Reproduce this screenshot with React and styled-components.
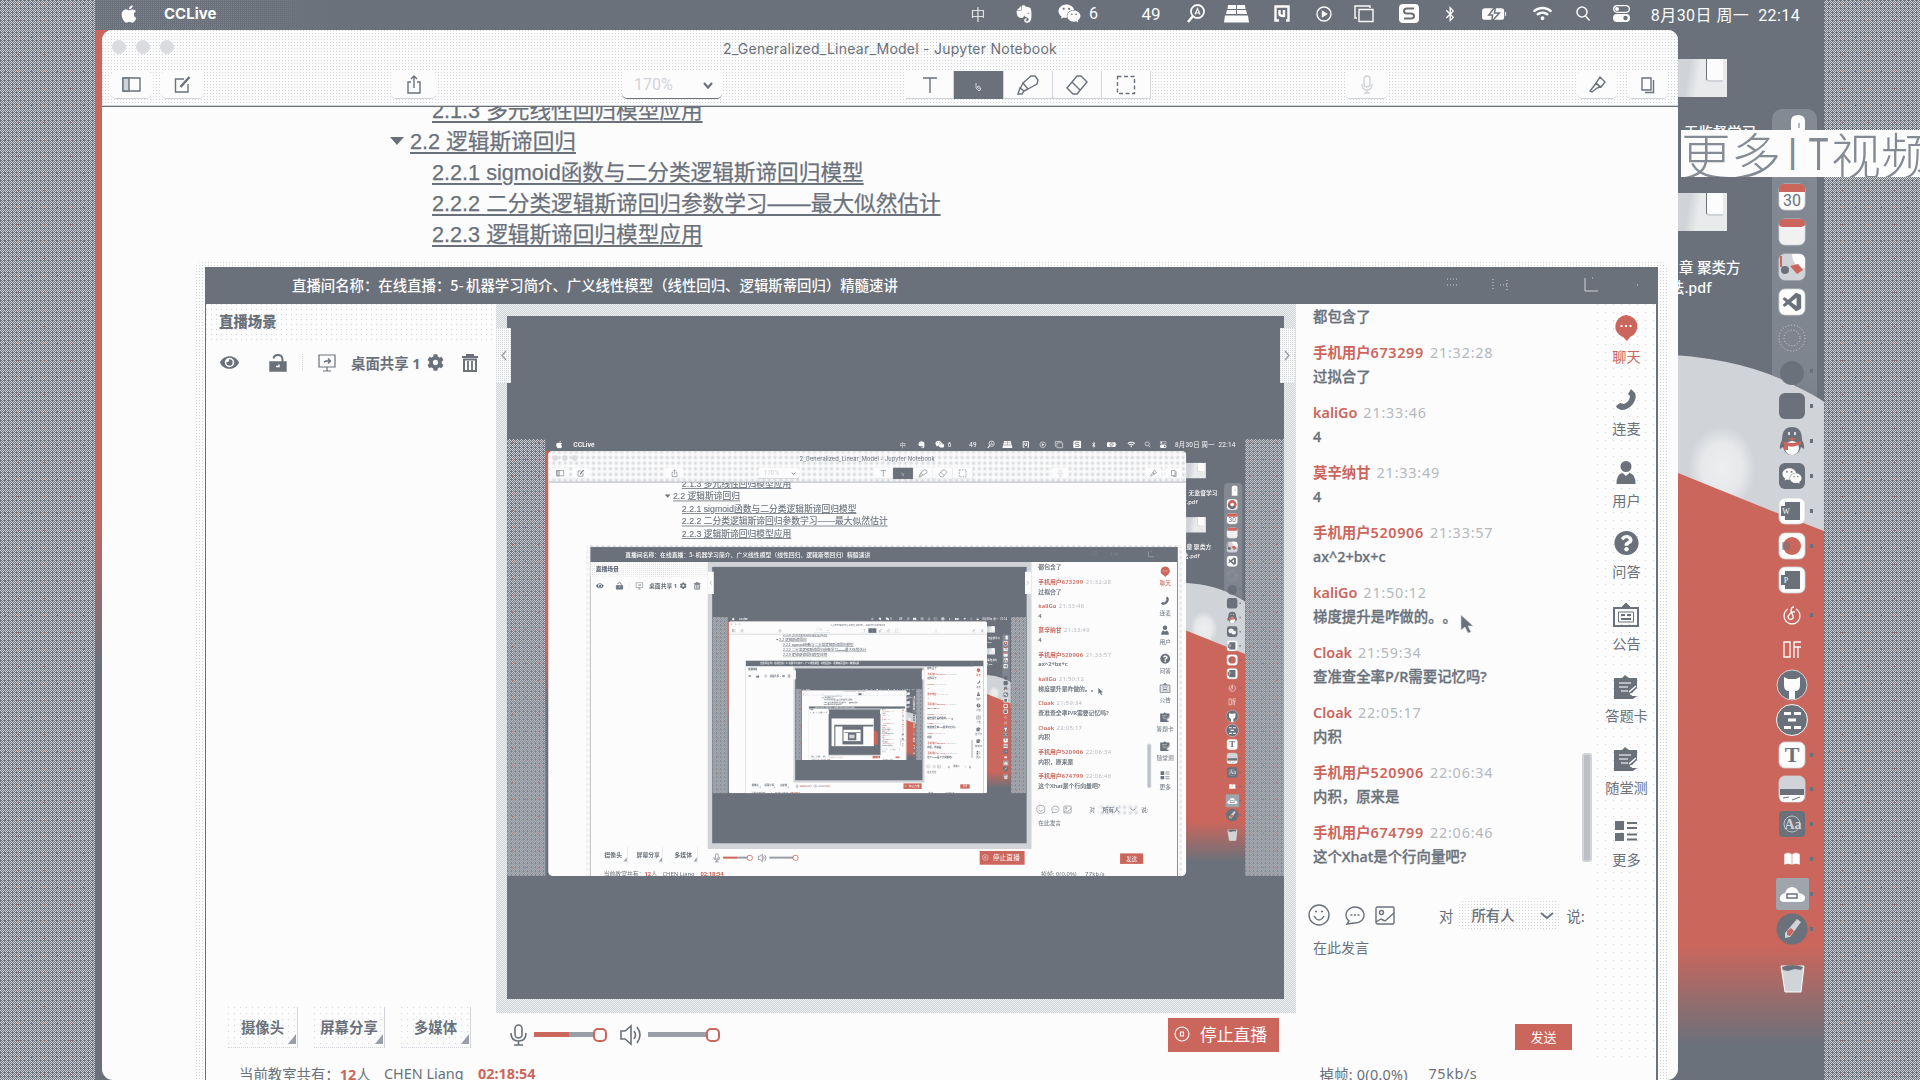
import React from "react";
import styled, { createGlobalStyle, css } from "styled-components";
import {
  FaApple, FaEvernote, FaWeixin, FaBluetoothB, FaWifi, FaEye, FaCog, FaPhone,
  FaQuestionCircle,
} from "react-icons/fa";
import { BiLogoVisualStudio } from "react-icons/bi";

const SLATE = "#6a717b";
const LIGHT = "#d0d3d8";
const WHITE = "#fcfcfc";
const RED = "#cb665c";
const SHOT_SCALE = 777 / 1920;
const MAX_DEPTH = 3;

const Global = createGlobalStyle`
  html, body { margin: 0; padding: 0; background: ${SLATE}; overflow: hidden; }
  * { box-sizing: border-box; }
`;

const sans = `"Noto Sans", "Noto Sans CJK SC", sans-serif`;

const grain = (size) => css`
  background-color: ${WHITE};
  background-image: conic-gradient(from 0deg at 1px 1px, transparent 75%, ${LIGHT} 0);
  background-size: ${size}px ${size}px;
`;

/* ---------- desktop ---------- */
const Scene = styled.div`
  width: 1920px; height: 1080px; display: flex; overflow: hidden; position: relative;
  font-family: ${sans}; color: ${SLATE}; background: ${SLATE};
  text-spacing-trim: space-all;
`;
const unit = (p) => 1 / Math.pow(SHOT_SCALE, p.$depth);
const SideBand = styled.div`
  flex: 0 0 ${(p) => p.$w}px;
  background:
    conic-gradient(from 0deg at ${unit}px ${unit}px, transparent 75%, ${RED} 0) ${(p) => 5 * unit(p)}px ${(p) => 3 * unit(p)}px / ${(p) => 13 * unit(p)}px ${(p) => 17 * unit(p)}px,
    conic-gradient(from 0deg at ${unit}px ${unit}px, transparent 75%, ${SLATE} 0) 0 0 / ${(p) => 4 * unit(p)}px ${(p) => 4 * unit(p)}px,
    repeating-conic-gradient(${SLATE} 0 25%, ${LIGHT} 0 50%) 0 0 / ${(p) => 2 * unit(p)}px ${(p) => 2 * unit(p)}px;
`;
const Desktop = styled.div`
  flex: 0 0 1729px; position: relative; display: flex; flex-direction: column; overflow: hidden;
`;
const Wallpaper = styled.svg`position: absolute; inset: 0; width: 1729px; height: 1080px;`;

const MenuBar = styled.div`
  position: relative; height: 30px; flex: none; display: flex; align-items: center;
  padding: 0 0 6px 25px; color: ${WHITE}; background: ${SLATE};
  &::before {
    content: ""; position: absolute; left: 0; top: 0; width: 260px; height: 30px;
    background: conic-gradient(from 0deg at 1px 1px, transparent 75%, ${RED} 0) 0 0 / 2px 2px;
    mask-image: linear-gradient(90deg, #000 40%, transparent);
  }
`;
const MenuSlot = styled.div`
  position: relative; flex: none; height: 24px; width: ${(p) => p.$w}px; margin-left: ${(p) => p.$ml || 0}px;
  display: flex; align-items: center; justify-content: center; white-space: pre;
  padding-top: 3px;
  font: 400 ${(p) => p.$size || 16}px Roboto, "Noto Sans CJK SC", sans-serif;
  letter-spacing: ${(p) => p.$ls || 0}px;
  opacity: ${(p) => p.$o || 1};
`;
const AppName = styled(MenuSlot)`font-weight: 700; font-family: Inter, sans-serif; font-size: 15px; justify-content: flex-start;`;

const FileThumb = styled.div`
  position: absolute; left: 1560px; top: ${(p) => p.$y}px; width: 72px; height: 38px;
  background: linear-gradient(100deg, ${LIGHT} 45%, #e9eaec 60%);
  display: flex; justify-content: flex-end; padding: 0 4px 0 0;
  &::after {
    content: ""; width: 16px; height: 21px; background: ${WHITE};
    border-left: 1px solid ${SLATE}; border-bottom: 2px solid ${LIGHT}; border-bottom-left-radius: 4px;
  }
`;
const FileLabel = styled.div`
  position: absolute; left: ${(p) => p.$x}px; top: ${(p) => p.$y}px;
  font: 500 14.4px/20px ${sans}; color: ${WHITE}; white-space: pre;
`;

/* ---------- dock ---------- */
const Dock = styled.div`
  position: absolute; left: 1677px; top: 109px; width: 45px; height: 893px; border-radius: 10px;
  background: linear-gradient(rgba(208,211,216,.26) 0, rgba(208,211,216,.2) 30%, transparent 44%);
  display: flex; flex-direction: column; align-items: flex-start; padding: 1px 0 0 3px;
`;
const DockSlot = styled.div`
  flex: none; height: 34.85px; width: 40px; display: flex; align-items: center;
  margin-top: ${(p) => p.$mt || 0}px;
  &::after {
    content: ""; width: 3px; height: 4px; margin-left: 1px;
    background: ${(p) => (p.$run ? SLATE : "transparent")};
  }
`;
const DockIcon = styled.svg`width: 34px; height: 34px; overflow: visible; flex: none;`;

const Tile = ({ fill = WHITE, children }) => (
  <>
    <rect x="4" y="4" width="26" height="26" rx="6" fill={fill} stroke={LIGHT} strokeWidth=".8" />
    {children}
  </>
);
const glyph = { textAnchor: "middle", fontFamily: "Liberation Serif, serif" };

const DOCK = [
  { art: <><path d="M16 30V11q0-6 7-6t7 6v19z" fill={WHITE} /><path d="M24 13v5" stroke={SLATE} /></> },
  { art: <Tile><circle cx="17" cy="17" r="11" fill={RED} /><path d="M6 17a11 11 0 0 0 20 6L17 17z" fill={SLATE} /><circle cx="17" cy="17" r="4.5" fill={WHITE} /></Tile> },
  { art: <Tile><path d="M4 12V9q0-5 5-5h16q5 0 5 5v3z" fill={RED} /><text x="17" y="26" fontSize="16" {...glyph} fontFamily="Roboto, sans-serif" fill={SLATE}>30</text></Tile> },
  { art: <Tile fill="#f1f1f2"><path d="M4 10V9q0-5 5-5h16q5 0 5 5v1q-2 2-4 2H8q-3 0-4-2z" fill={RED} /></Tile> },
  { art: <Tile fill={LIGHT}><path d="M17 4h7q6 0 6 6v8q-12 0-13-14z" fill={WHITE} /><path d="M15 16l8-2 5 6-6 4z" fill={RED} /><circle cx="10" cy="20" r="4" fill={SLATE} /><path d="M6 6v11" stroke={RED} strokeWidth="2" /></Tile> },
  { art: <><Tile /><BiLogoVisualStudio x="6" y="6" size="22" color={SLATE} /></> },
  { art: <g fill="none" stroke={LIGHT} strokeDasharray="1 2"><circle cx="17" cy="19" r="13" /><circle cx="17" cy="19" r="8" /></g> },
  { run: 1, art: <><circle cx="17" cy="19" r="12" fill={SLATE} /><path d="M17 24l5 9-2-10z" fill={SLATE} /></> },
  { run: 1, art: <rect x="4" y="4" width="26" height="26" rx="6" fill={SLATE} /> },
  { run: 1, art: <><path d="M7 16Q7 3 17 3t10 13q3 6 2 9l-3-2q-2 8-9 8t-9-8l-3 2q-1-3 2-9z" fill={SLATE} /><ellipse cx="17" cy="24" rx="7" ry="7" fill={WHITE} /><path d="M8 17q9 4 18 0v3q-8 4-13 2v4h-4v-5z" fill={RED} /><path d="M13 14h8l-4 3z" fill={RED} /><path d="M14 8v3M20 8v3" stroke={WHITE} strokeWidth="1.500" /></> },
  { run: 1, art: <><rect x="4" y="4" width="26" height="26" rx="6" fill={SLATE} /><FaWeixin x="7" y="7" size="20" color={WHITE} /></> },
  { run: 1, art: <Tile><path d="M10 8h15v18H10v-4H6V12h4z" fill={SLATE} /><text x="11" y="20" fontSize="8" fill={WHITE} {...glyph}>W</text></Tile> },
  { run: 1, art: <Tile><circle cx="17" cy="17" r="9" fill={RED} /><path d="M7 13h8v8H7z" fill={SLATE} opacity=".5" /></Tile> },
  { art: <Tile><path d="M10 8h15v18H10v-4H6V12h4z" fill={SLATE} /><text x="11" y="20" fontSize="8" fill={WHITE} {...glyph}>P</text></Tile> },
  { run: 1, art: <g fill="none" stroke={WHITE} strokeWidth="1.300"><path d="M13 11a8 8 0 1 0 8 0M19 9q-3 0-3 4l2 5a2.500 2.500 0 1 1-4-1q2-4 6-3" /></g> },
  { art: <g fill="none" stroke={WHITE} strokeWidth="1.300"><path d="M9 9h6v15H9zM26 9h-7v16M19 14h7M23 14v11" /></g> },
  { art: <><circle cx="17" cy="17" r="15" fill={SLATE} stroke={LIGHT} /><path d="M9 9l4 2h8l4-2v8q0 6-5 6v8h-6v-8q-5 0-5-6z" fill={WHITE} /></> },
  { art: <><circle cx="17" cy="17" r="15.500" fill={SLATE} stroke={WHITE} /><path d="M9 9h7v3H9zM19 9h7v3h-7zM13 15.500h8v3h-8zM9 23h7v3H9zM19 23h7v3h-7z" fill={WHITE} /></> },
  { run: 1, art: <Tile><text x="17" y="24" fontSize="22" fontWeight="700" fill={SLATE} {...glyph}>T</text></Tile> },
  { run: 1, art: <Tile fill={LIGHT}><path d="M5 17h24v6H5z" fill={SLATE} /><path d="M5 23h24v4q-2 3-5 3H9q-4 0-4-3z" fill={WHITE} /><path d="M8 26l6-1M17 28l8-3" stroke={SLATE} /></Tile> },
  { run: 1, art: <><rect x="4" y="4" width="26" height="26" rx="4" fill={SLATE} /><circle cx="17" cy="17" r="8" fill="none" stroke={LIGHT} strokeWidth=".8" /><text x="18" y="22" fontSize="14" fontWeight="700" fill={LIGHT} {...glyph}>Aa</text></> },
  { run: 1, art: <path d="M9 12q4-3 8 0 4-3 8 0v11q-4-2-8 0-4-2-8 0zM17 12v11" fill={WHITE} stroke={RED} strokeWidth=".5" /> },
  { run: 1, art: <><rect x="1" y="1" width="33" height="32" rx="2" fill="#a0a4ab" /><path d="M8 25q-4-1-3-5 1-3 5-4 2-6 7-6t7 6q6 1 6 5 0 4-5 4z" fill={WHITE} /><rect x="12" y="17" width="10" height="4" fill="none" stroke={SLATE} strokeWidth="1.500" /></> },
  { run: 1, art: <><circle cx="17" cy="17" r="15.500" fill={SLATE} /><path d="M10 21L22 7l4 3-11 15-5 1z" fill={LIGHT} /><path d="M12 19l4-3 3 3-4 5-3-1z" fill={RED} /></> },
  { mt: 15, art: <><path d="M6 4h23l-3 26H10z" fill={LIGHT} stroke={WHITE} /><path d="M7 5q10-4 21 0l-2 3-6-1-7 2-5-1z" fill={SLATE} /></> },
];

/* ---------- notebook window ---------- */
const NoteWindow = styled.div`
  position: absolute; left: 7px; top: 30px; width: 1576px; height: 1050px;
  background: ${WHITE}; border-radius: 10px 10px 11px 11px; overflow: hidden;
  display: flex; flex-direction: column;
`;
const NoteHeader = styled.div`
  flex: 0 0 77px; display: flex; flex-direction: column; ${grain(3)}
  border-bottom: 1px solid ${SLATE}; box-shadow: inset 0 -1px ${LIGHT};
`;
const TitleRow = styled.div`
  display: grid; grid-template-columns: 1fr auto 1fr; height: 38px; align-items: center; padding-bottom: 2px;
  font: 400 14px Inter, sans-serif; letter-spacing: 0.25px;
`;
const Lights = styled.div`
  display: flex; gap: 10px; padding: 0 0 3px 10px;
  i { width: 14px; height: 14px; border-radius: 7px; background: #dadce0; }
`;
const NoteTools = styled.div`display: flex; padding: 3px 0 0 9px; height: 33px;`;
const ToolButton = styled.div`
  flex: none; width: ${(p) => p.$w}px; height: 28px; margin-left: ${(p) => p.$ml || 0}px;
  display: flex; align-items: center; justify-content: center;
  background: ${(p) => (p.$on ? SLATE : WHITE)}; border-radius: ${(p) => (p.$flat ? 0 : 5)}px;
  border-right: ${(p) => (p.$flat ? `1px solid ${LIGHT}` : "0")};
  border-bottom: ${(p) => (p.$on ? 0 : 1)}px solid ${(p) => p.$edge || LIGHT};
`;
const ToolGroup = styled.div`
  display: flex; margin-left: 184px; width: 245px; height: 28px; border-radius: 5px; background: ${WHITE};
`;
const ZoomSelect = styled(ToolButton)`
  justify-content: space-between; padding: 0 9px 0 12px; font: 400 16px Roboto, sans-serif; color: ${LIGHT};
`;
const Line = styled.svg`
  fill: none; stroke: currentColor; stroke-width: ${(p) => p.$sw || 1.4};
  color: ${(p) => p.$c || SLATE}; overflow: visible; flex: none;
`;
const Outline = styled.div`
  display: flex; flex-direction: column; margin-top: -12px; overflow: hidden; padding-left: 288px;
  clip-path: inset(12px 0 0 0);
`;
const OutlineRow = styled.div`
  height: 31px; display: flex; align-items: center; padding-left: ${(p) => (p.$top ? 0 : 42)}px;
  font: 400 21.65px/31px "Liberation Sans", "Noto Sans CJK SC", sans-serif; white-space: pre;
  -webkit-text-stroke: 0.25px ${SLATE};
  span { text-decoration: underline; text-decoration-thickness: 1.5px; text-underline-offset: 3px; }
`;
const Caret = styled.div`
  border: 7px solid transparent; border-top: 8px solid ${SLATE}; border-bottom: 0; margin: 0 6px 2px 0;
`;

/* ---------- live window ---------- */
const LiveWindow = styled.div`
  position: absolute; left: 110px; top: 267px; width: 1453px; height: 813px;
  display: flex; flex-direction: column; background: ${WHITE}; overflow: hidden;
  border: 1px solid ${SLATE}; border-width: 0 2px 0 1px;
`;
const LiveShadow = styled.div`
  position: absolute; left: 101px; top: 262px; width: 1471px; height: 818px;
  background: conic-gradient(from 0deg at 1px 1px, transparent 75%, ${LIGHT} 0) 0 0 / 3px 3px;
  border-radius: 6px 6px 0 0;
`;
const LiveTitle = styled.div`
  flex: 0 0 37px; background: ${SLATE}; color: ${WHITE}; display: flex; align-items: center;
  justify-content: space-between; padding: 0 38px 2px 86px;
  font: 500 14.4px "Noto Sans CJK SC", sans-serif; white-space: pre;
`;
const Wide = styled.span`letter-spacing: 2.4px;`;
const LiveMain = styled.div`
  flex: 0 0 754px; display: grid; grid-template-columns: 290px 800px 301px 59px;
`;
const Column = styled.div`display: flex; flex-direction: column; min-width: 0; min-height: 0;`;
const SceneHeader = styled.div`
  height: 36px; flex: none; ${grain(5)} display: flex; align-items: center; padding: 0 0 3px 13px;
  font: 900 14.4px "Noto Sans CJK SC", sans-serif;
`;
const SourceRow = styled.div`
  height: 46px; display: flex; align-items: center; padding: 0 0 1px 14px;
  font: 700 14.4px ${sans}; white-space: pre;
`;
const Gap = styled.div`flex: 0 0 ${(p) => p.$w}px;`;
const Divider = styled.div`height: 17px; border-left: 1px dotted ${LIGHT};`;
const Fill = styled.div`flex: 1;`;
const AddRow = styled.div`display: flex; gap: 16px; padding: 0 0 10px 22px;`;
const AddButton = styled.div`
  position: relative; width: ${(p) => p.$w}px; height: 41px; ${grain(6)}
  border-bottom: 1px dotted ${LIGHT}; border-right: 1px solid ${LIGHT};
  display: flex; align-items: center; justify-content: center; padding-bottom: 2px;
  font: 700 14.4px "Noto Sans CJK SC", sans-serif;
  &::after {
    content: ""; position: absolute; right: 1px; bottom: 3px; border-left: 8px solid transparent;
    border-bottom: 10px solid #9a9fa7;
  }
`;
const StageFrame = styled.div`
  position: relative; flex: 0 0 709px; padding: 12px 12px 14px 11px; display: flex;
  background: repeating-conic-gradient(${LIGHT} 0 25%, #eceef0 0 50%) 0 0 / 2px 2px;
`;
const Stage = styled.div`
  flex: 1; background: ${SLATE}; display: flex; align-items: center; overflow: hidden;
`;
const Shot = styled.div`width: 777px; height: 437px; flex: none; overflow: hidden;`;
const Shrink = styled.div`
  width: 1920px; height: 1080px; transform: scale(${SHOT_SCALE}); transform-origin: 0 0;
`;
const Handle = styled.div`
  position: absolute; top: 24px; width: 15px; height: 55px; ${(p) => (p.$right ? "right: 1px" : "left: 0")};
  ${grain(2)} display: flex; align-items: center; justify-content: center;
`;
const Controls = styled.div`display: flex; height: 43px; align-items: center; padding-left: 14px;`;
const Slider = styled.div`
  width: ${(p) => p.$w}px; height: 11px; display: flex; align-items: center; margin-left: ${(p) => p.$ml}px;
  &::before {
    content: ""; flex: 1; height: 5px;
    background: linear-gradient(90deg, ${(p) => p.$c} ${(p) => p.$v}%, #9a9fa7 ${(p) => p.$v}%);
  }
  &::after {
    content: ""; width: 10px; height: 10px; border-radius: 5px; border: 2px solid ${RED}; background: ${WHITE}; margin-left: -2px;
  }
`;
const StopButton = styled.div`
  margin-left: auto; margin-right: 17px; width: 111px; height: 34px; background: ${RED}; color: ${WHITE};
  display: flex; align-items: center; gap: 10px; padding: 0 0 2px 6px;
  font: 400 16.8px "Noto Sans CJK SC", sans-serif;
`;

/* ---------- chat ---------- */
const ChatArea = styled.div`flex: 0 0 584px; display: flex; padding: 1px 5px 0 17px; overflow: hidden;`;
const ChatList = styled.div`flex: 1; display: flex; flex-direction: column; gap: 12px;`;
const Message = styled.div`
  display: flex; flex-direction: column; font: 500 14.4px/24px "Noto Sans", "Noto Sans CJK SC", sans-serif; white-space: pre;
  -webkit-text-stroke: 0.3px currentColor;
`;
const Who = styled.div`color: ${RED}; font-weight: 600; height: 24px; overflow: hidden; -webkit-text-stroke: 0;`;
const Num = styled.span`letter-spacing: 0.65px;`;
const Time = styled.span`color: #b4b8bf; font-weight: 400; letter-spacing: 0.8px; margin-left: 6px;`;
const ScrollThumb = styled.div`
  width: 10px; height: 109px; margin-top: 448px; border-radius: 3px; background: #bcc0c6; border: 2px solid ${LIGHT};
`;
const ComposeTools = styled.div`
  height: 54px; display: flex; align-items: center; padding-left: 12px;
  font: 400 14.4px "Noto Sans CJK SC", sans-serif; white-space: pre;
`;
const Audience = styled.div`
  width: 101px; height: 28px; margin: 0 6px 0 6px; display: flex; align-items: center; justify-content: space-between;
  padding: 0 7px 1px 12px; ${grain(3)} font-weight: 500; border-radius: 4px;
`;
const Placeholder = styled.div`padding-left: 17px; font: 400 14px/22px "Noto Sans CJK SC", sans-serif; margin-top: -6px;`;
const SendButton = styled.div`
  align-self: flex-end; margin: 0 25px 8px 0; width: 57px; height: 26px; background: ${RED}; color: ${WHITE};
  display: flex; align-items: center; justify-content: center; font: 400 13px "Noto Sans CJK SC", sans-serif;
  padding-bottom: 2px;
`;
const Tabs = styled.div`
  display: flex; flex-direction: column; align-items: center; padding-top: 11px; ${grain(8)}
`;
const Tab = styled.div`
  height: 71.8px; display: flex; flex-direction: column; align-items: center; gap: 7px; flex: none;
  color: ${(p) => (p.$on ? RED : SLATE)}; font: 400 14.2px/16px "Noto Sans CJK SC", sans-serif; white-space: nowrap;
  svg { height: 26px; flex: none; overflow: visible; }
`;
const StatusBar = styled.div`
  height: 32px; flex: none; display: flex; align-items: center; padding: 0 0 2px 33px;
  font: 400 14.4px "Noto Sans", "Noto Sans CJK SC", sans-serif; white-space: pre;
  b { color: ${RED}; font-weight: 700; }
`;
const StatusText = styled.span`
  margin-left: ${(p) => p.$ml || 0}px; width: ${(p) => (p.$w ? p.$w + "px" : "auto")}; flex: none;
  letter-spacing: ${(p) => p.$ls || 0}px;
`;
const Pointer = styled.svg`position: absolute; left: 1365px; top: 614px; width: 14px; height: 20px;`;

/* ---------- banner ---------- */
const Banner = styled.div`
  position: absolute; left: 1681px; top: 130px; width: 239px; height: 47px; background: ${WHITE};
  overflow: hidden; display: flex; align-items: center; white-space: nowrap;
  font: 300 50px/47px "Noto Sans CJK SC", sans-serif; color: #858b94;
`;
const Narrow = styled.span`
  font: 400 47px/47px "Liberation Sans", sans-serif; width: 25px; flex: none; display: flex; justify-content: center;
  transform: translateX(${(p) => p.$dx}px) scaleX(0.7);
`;

const MESSAGES = [
  { text: "都包含了" },
  { who: "手机用户", num: "673299", at: "21:32:28", text: "过拟合了" },
  { who: "kaliGo", at: "21:33:46", text: "4" },
  { who: "莫辛纳甘", at: "21:33:49", text: "4" },
  { who: "手机用户", num: "520906", at: "21:33:57", text: "ax^2+bx+c" },
  { who: "kaliGo", at: "21:50:12", text: "梯度提升是咋做的。。" },
  { who: "Cloak", at: "21:59:34", text: "查准查全率P/R需要记忆吗?" },
  { who: "Cloak", at: "22:05:17", text: "内积" },
  { who: "手机用户", num: "520906", at: "22:06:34", text: "内积，原来是" },
  { who: "手机用户", num: "674799", at: "22:06:46", text: "这个Xhat是个行向量吧?" },
];

const Clipboard = () => (
  <svg width="26" viewBox="0 0 26 26" fill="currentColor">
    <path d="M1 4h8l3-3 4 3h8v10l-6 6 1 2h5l-4 3H1z" />
    <path d="M6 9h12M6 13h9M8 17h7" stroke={LIGHT} strokeWidth="1.400" />
    <path d="M16 18l7-6M17 20h7" stroke={WHITE} strokeWidth="1.500" />
  </svg>
);

const TABS = [
  ["聊天", <svg width="26" viewBox="0 0 26 26"><path d="M13 0a12.500 11.500 0 0 1 4 22l-3 4-4-4A12.500 11.500 0 0 1 13 0z" fill={RED} /><path d="M7.500 11h2M12 11h2M16.500 11h2" stroke={WHITE} strokeWidth="2" /></svg>],
  ["连麦", <svg width="24" viewBox="0 0 24 26"><path d="M17 2l4 4q2 5-2 11-5 6-12 6l-4-2-1-2 4-3 4 1q6-3 6-8l-2-2z" fill="currentColor" /></svg>],
  ["用户", <svg width="22" viewBox="0 0 22 26" fill="currentColor"><circle cx="11" cy="7.500" r="5.500" /><path d="M1.500 25q0-10 6-11l3.500 3 3.500-3q6 1 6 11z" /></svg>],
  ["问答", <FaQuestionCircle size={25} />],
  ["公告", <svg width="26" viewBox="0 0 26 26" fill="none" stroke="currentColor"><path d="M1 6h24v18H1z" strokeWidth="2" /><path d="M9 5l4-4 4 4z" fill="currentColor" /><path d="M5.500 10h15v10h-15z" /><path d="M8 13h4M14 13h4M8 17h10" strokeWidth="2" /></svg>],
  ["答题卡", <Clipboard />],
  ["随堂测", <Clipboard />],
  ["更多", <svg width="24" viewBox="0 0 24 26" fill="currentColor"><path d="M1 3h9v9H1zM1 15h9v8H1z" /><path d="M13 5h10M13 10h10M13 16.500h10M13 21.500h10" stroke="currentColor" strokeWidth="1.800" /></svg>],
];

function MenuItems() {
  return (
    <MenuBar>
      <MenuSlot $w={18}><FaApple size={20} /></MenuSlot>
      <AppName $w={60} $ml={26}>CCLive</AppName>
      <MenuSlot $w={14} $ml={747} $o={0.8} $size={15}>中</MenuSlot>
      <MenuSlot $w={18} $ml={30}><FaEvernote size={20} /></MenuSlot>
      <MenuSlot $w={24} $ml={24}><FaWeixin size={23} /></MenuSlot>
      <MenuSlot $w={9} $ml={8}>6</MenuSlot>
      <MenuSlot $w={20} $ml={43} $size={17}>49</MenuSlot>
      <MenuSlot $w={18} $ml={26}>
        <Line width="18" height="19" viewBox="0 0 18 19" $c={WHITE} $sw={1.8}><circle cx="10.500" cy="7.500" r="6.500" /><path d="M6 12l-5 6" strokeWidth="2.500" /><path d="M8 10.500l2.500-6 2.500 6M9 9h3" strokeWidth="1.200" /></Line>
      </MenuSlot>
      <MenuSlot $w={25} $ml={19}>
        <svg width="25" height="18" viewBox="0 0 25 18" fill={WHITE}><path d="M4 0h8v4H3.500zM13 0h8l.5 4H13zM3 5h9v4H2zM13 5h9l1 4H13zM1 10.500h23l1 7H0z" /></svg>
      </MenuSlot>
      <MenuSlot $w={16} $ml={25}>
        <Line width="16" height="17" viewBox="0 0 16 17" $c={WHITE} $sw={2.4}><path d="M5 15.500H1.500v-14h13v14H12M5.500 5v4q0 2 4.500 2M10 5v7" /></Line>
      </MenuSlot>
      <MenuSlot $w={16} $ml={26}>
        <Line width="16" height="16" viewBox="0 0 16 16" $c={WHITE}><circle cx="8" cy="8" r="7" /><path d="M6.500 5.500v5l4-2.500z" fill={WHITE} /></Line>
      </MenuSlot>
      <MenuSlot $w={20} $ml={22}>
        <Line width="20" height="17" viewBox="0 0 20 17" $c={WHITE}><path d="M5 4.500h14v12H5zM3 13H1V1h15v2" /></Line>
      </MenuSlot>
      <MenuSlot $w={20} $ml={25}>
        <svg width="20" height="19" viewBox="0 0 20 19"><rect width="20" height="19" rx="4" fill={WHITE} /><path d="M15 4.500H8Q5 4.500 5 7t3 2.500h4q3 0 3 2.500t-3 2.500H5" fill="none" stroke={SLATE} strokeWidth="2" /></svg>
      </MenuSlot>
      <MenuSlot $w={10} $ml={26}><FaBluetoothB size={16} /></MenuSlot>
      <MenuSlot $w={26} $ml={27}>
        <svg width="27" height="16" viewBox="0 0 27 16"><rect y="2" width="23" height="12" rx="3" fill={WHITE} /><path d="M24.500 6v4" stroke={WHITE} /><path d="M14 0L7 9h4l-1 7 8-9h-5z" fill={WHITE} stroke={SLATE} strokeWidth="1.500" /></svg>
      </MenuSlot>
      <MenuSlot $w={19} $ml={25}><FaWifi size={19} /></MenuSlot>
      <MenuSlot $w={14} $ml={24}>
        <Line width="14" height="15" viewBox="0 0 14 15" $c={WHITE} $sw={1.5}><circle cx="6" cy="6" r="5" /><path d="M9.500 10l4 4.500" /></Line>
      </MenuSlot>
      <MenuSlot $w={17} $ml={23}>
        <svg width="17" height="17" viewBox="0 0 17 17"><rect x=".7" y=".7" width="15.600" height="6.600" rx="3.300" fill="none" stroke={WHITE} strokeWidth="1.300" /><circle cx="4" cy="4" r="2" fill={WHITE} /><rect y="9" width="17" height="8" rx="4" fill={WHITE} /><circle cx="12.500" cy="13" r="2.200" fill={SLATE} /></svg>
      </MenuSlot>
      <MenuSlot $w={151} $ml={20} $ls={0.45}>8月30日 周一  22:14</MenuSlot>
    </MenuBar>
  );
}

function Notebook() {
  return (
    <NoteWindow>
      <NoteHeader>
        <TitleRow>
          <Lights><i /><i /><i /></Lights>
          <span>2_Generalized_Linear_Model - Jupyter Notebook</span>
        </TitleRow>
        <NoteTools>
          <ToolButton $w={40}>
            <Line width="19" height="15" viewBox="0 0 19 15"><path d="M1 1h17v13H1z" /><path d="M1 1h6v13H1z" fill={LIGHT} /></Line>
          </ToolButton>
          <ToolButton $w={43} $ml={10}>
            <Line width="17" height="17" viewBox="0 0 17 17"><path d="M10 3H1.500v13H14V8" /><path d="M6.500 11L15.500 1" strokeWidth="2.500" /></Line>
          </ToolButton>
          <ToolButton $w={45} $ml={187}>
            <Line width="14" height="19" viewBox="0 0 14 19"><path d="M4 7H1v11h12V7h-3M7 13V1M4 4l3-3 3 3" /></Line>
          </ToolButton>
          <ZoomSelect $w={100} $ml={186} $edge={SLATE}>
            170%
            <Line width="10" height="6" viewBox="0 0 10 6" $sw={2.2}><path d="M1 1l4 4.500L9 1" /></Line>
          </ZoomSelect>
          <ToolGroup>
            <ToolButton $w={48} $flat><Line width="14" height="16" viewBox="0 0 14 16"><path d="M0 1h14M7 1v15" /></Line></ToolButton>
            <ToolButton $w={50} $flat $on><Line width="7" height="2" viewBox="0 0 7 2" $c={LIGHT} $sw={1}><path d="M1-1v5l3 3 2-2-2-3-2 1 4 3" /></Line></ToolButton>
            <ToolButton $w={49} $flat>
              <Line width="22" height="20" viewBox="0 0 22 20"><path d="M1 19l2-6 4 3-2 3zM3.500 13L6 8l5 6-4 2M6 8l8-7h4l3 4-1 4-9 5" /></Line>
            </ToolButton>
            <ToolButton $w={49} $flat>
              <Line width="22" height="20" viewBox="0 0 22 20"><path d="M1 13L11 1h4l6 6-10 12H7zM6 7l8 8" /></Line>
            </ToolButton>
            <ToolButton $w={49} $flat>
              <Line width="18" height="18" viewBox="0 0 18 18"><path d="M.5.5h17v17H.5z" strokeDasharray="4 2.500" /></Line>
            </ToolButton>
          </ToolGroup>
          <ToolButton $w={43} $ml={194}>
            <Line width="12" height="19" viewBox="0 0 12 19" $c={LIGHT}><rect x="3" y="1" width="6" height="11" rx="3" /><path d="M1 9q0 6 5 6t5-6M6 15v3M3 18h6" /></Line>
          </ToolButton>
          <ToolButton $w={40} $ml={189}>
            <Line width="17" height="16" viewBox="0 0 17 16"><path d="M11 0l5 5-4 5-5-4zM7 6l4 4-3 1-5 4-2-1 4-5z" /></Line>
          </ToolButton>
          <ToolButton $w={41} $ml={10}>
            <Line width="13" height="16" viewBox="0 0 13 16"><path d="M1 1h9v12H1zM4 15.500h8.500V3" /></Line>
          </ToolButton>
        </NoteTools>
      </NoteHeader>
      <Outline>
        <OutlineRow><span>2.1.3 多元线性回归模型应用</span></OutlineRow>
        <OutlineRow $top><Caret /><span>2.2 逻辑斯谛回归</span></OutlineRow>
        <OutlineRow><span>2.2.1 sigmoid函数与二分类逻辑斯谛回归模型</span></OutlineRow>
        <OutlineRow><span>2.2.2 二分类逻辑斯谛回归参数学习——最大似然估计</span></OutlineRow>
        <OutlineRow><span>2.2.3 逻辑斯谛回归模型应用</span></OutlineRow>
      </Outline>
    </NoteWindow>
  );
}

const MiniArt = styled.svg`display: block; width: 777px; height: 437px;`;

function Miniature() {
  return (
    <MiniArt viewBox="0 0 1920 1080" preserveAspectRatio="none">
      <rect width="1920" height="1080" fill={SLATE} />
      <path d="M1678 473l145 60v480h-145z" fill={RED} />
      <rect x="102" y="30" width="1576" height="1050" fill={WHITE} />
      <path d="M205 267h1453v60H205zM205 300h40v780h-40z" fill={SLATE} />
      <rect x="507" y="316" width="777" height="683" fill={SLATE} />
      <rect x="548" y="451" width="638" height="425" fill={WHITE} />
      <path d="M590 548h588v20H590zM712 568h314v276H712z" fill={SLATE} />
      <path d="M760 640h200v130H760z" fill={LIGHT} />
    </MiniArt>
  );
}

function Live({ depth }) {
  return (
    <LiveWindow>
      <LiveTitle>
        <span>直播间名称：在线直播：5<Wide>-</Wide>机器学习简介、广义线性模型（线性回归、逻辑斯蒂回归）精髓速讲</span>
        <Line width="166" height="16" viewBox="0 0 166 16" $c={LIGHT} $sw={1}>
          <path d="M-5 2h12M-5 8h12M41 2v12M48 8h8M55 3v12" strokeDasharray="1 2" />
          <path d="M133 1v13h13" /><path d="M140 1h1M185 8h1" />
        </Line>
      </LiveTitle>
      <LiveMain>
        <Column>
          <SceneHeader>直播场景</SceneHeader>
          <SourceRow>
            <FaEye size={19} />
            <Gap $w={30} />
            <Line width="18" height="18" viewBox="0 0 18 18"><path d="M4.500 4.500Q5 1 9 1t4.500 4v3" strokeWidth="2" /><path d="M1 8h16v9H1z" fill={SLATE} /><path d="M7 12.500h3v-2" stroke={WHITE} /></Line>
            <Gap $w={15} /><Divider /><Gap $w={15} />
            <Line width="18" height="18" viewBox="0 0 18 18"><path d="M1 1h16v12H1zM9 13v4M5 17h8" strokeWidth="1.200" /><path d="M6 8l2-1h4M10 4.500l2.500 2.500L10 9.500" /></Line>
            <Gap $w={15} />
            桌面共享 1
            <Gap $w={6} />
            <FaCog size={17} />
            <Gap $w={18} />
            <Line width="16" height="18" viewBox="0 0 16 18"><path d="M0 3h16M5 2V1h6v1" strokeWidth="2" /><path d="M2 5.500h12v11.500H2z" strokeWidth="2" /><path d="M6 7v9M10 7v9" strokeWidth="1.800" /></Line>
          </SourceRow>
          <Fill />
          <AddRow>
            <AddButton $w={70}>摄像头</AddButton>
            <AddButton $w={71}>屏幕分享</AddButton>
            <AddButton $w={70}>多媒体</AddButton>
          </AddRow>
        </Column>
        <Column>
          <StageFrame>
            <Stage>
              <Shot>
                {depth < MAX_DEPTH ? <Shrink><Screen depth={depth + 1} /></Shrink> : <Miniature />}
              </Shot>
            </Stage>
            <Handle><Line width="5" height="9" viewBox="0 0 5 9" $c="#9a9fa7"><path d="M5 0L1 4.500 5 9" /></Line></Handle>
            <Handle $right><Line width="5" height="9" viewBox="0 0 5 9" $c="#9a9fa7"><path d="M0 0l4 4.500L0 9" /></Line></Handle>
          </StageFrame>
          <Controls>
            <Line width="17" height="22" viewBox="0 0 17 22" $sw={1.6}><rect x="5" y="1" width="7" height="13" rx="3.500" /><path d="M1 9q0 8 7.500 8T16 9M8.500 17v4M4 21h9" /></Line>
            <Slider $w={73} $ml={7} $v={58} $c={RED} />
            <Gap $w={13} />
            <Line width="22" height="20" viewBox="0 0 22 20" $sw={1.6}><path d="M1 6h4l6-5v18l-6-5H1zM14 6q3 4 0 8M17 2q6 8 0 16" /></Line>
            <Slider $w={72} $ml={6} $v={100} $c="#9a9fa7" />
            <StopButton>
              <Line width="16" height="16" viewBox="0 0 16 16" $c={WHITE} $sw={1.1}><circle cx="8" cy="8" r="7" /><path d="M6.500 6h3v4h-3z" /></Line>
              停止直播
            </StopButton>
          </Controls>
        </Column>
        <Column>
          <ChatArea>
            <ChatList>
              {MESSAGES.map((m, i) => (
                <Message key={i}>
                  {m.who && <Who>{m.who}{m.num && <Num>{m.num}</Num>}<Time>{m.at}</Time></Who>}
                  <div>{m.text}</div>
                </Message>
              ))}
            </ChatList>
            <ScrollThumb />
          </ChatArea>
          <ComposeTools>
            <Line width="22" height="22" viewBox="0 0 22 22"><circle cx="11" cy="11" r="10" /><path d="M6 12q5 8 10 0M7 7.500h2M13 7.500h2" /></Line>
            <Gap $w={15} />
            <Line width="20" height="19" viewBox="0 0 20 19"><path d="M4 15a9 8 0 1 1 5 2l-7 1zM5.500 9h2M9 9h2M12.500 9h2" /></Line>
            <Gap $w={10} />
            <Line width="20" height="19" viewBox="0 0 20 19"><rect x="1" y="1" width="18" height="17" rx="1.500" /><circle cx="6.500" cy="6.500" r="2" /><path d="M1 16l5-3 4 2 9-8" /></Line>
            <Gap $w={44} />
            对
            <Audience>所有人<Line width="12" height="6" viewBox="0 0 12 6" $sw={1.8}><path d="M0 1l6 5 6-5" /></Line></Audience>
            说:
          </ComposeTools>
          <Placeholder>在此发言</Placeholder>
          <Fill />
          <SendButton>发送</SendButton>
        </Column>
        <Tabs>
          {TABS.map(([label, icon], i) => <Tab key={label} $on={i === 0}>{icon}<span>{label}</span></Tab>)}
        </Tabs>
      </LiveMain>
      <StatusBar>
        <StatusText $w={145}>当前教室共有：<b>12</b>人</StatusText>
        <StatusText $w={94}>CHEN Liang</StatusText>
        <b>02:18:54</b>
        <StatusText $ml={784} $w={109} $ls={0.25}>掉帧: 0(0.0%)</StatusText>
        <StatusText $ls={0.6}>{depth ? "77kb/s" : "75kb/s"}</StatusText>
      </StatusBar>
    </LiveWindow>
  );
}

function Screen({ depth }) {
  const fade = `fade${depth}`;
  return (
    <Scene>
      <SideBand $w={95} $depth={depth} />
      <Desktop>
        <Wallpaper viewBox="0 0 1729 1080">
          <defs>
            <linearGradient id={fade} x1="0" y1="0" x2="0" y2="1">
              <stop offset="0" stopColor={RED} /><stop offset=".83" stopColor={RED} /><stop offset="1" stopColor={SLATE} />
            </linearGradient>
            <linearGradient id={fade + "l"} x1="0" y1="0" x2="0" y2="1">
              <stop offset="0" stopColor={RED} /><stop offset=".75" stopColor={RED} /><stop offset="1" stopColor={SLATE} />
            </linearGradient>
            <radialGradient id={fade + "w"}><stop offset="0" stopColor="#eceef0" /><stop offset=".6" stopColor="#e6e8ea" /><stop offset="1" stopColor={LIGHT} /></radialGradient>
          </defs>
          <rect width="1729" height="1080" fill={SLATE} />
          <rect y="28" width="300" height="640" fill={`url(#${fade}l)`} />
          <path d="M1560 354Q1640 357 1690 381 1722 396 1729 402V560H1560z" fill={LIGHT} />
          <ellipse cx="1627" cy="468" rx="34" ry="42" fill={`url(#${fade}w)`} />
          <path d="M1560 460L1583 473 1677 511 1729 531V1045H1560z" fill={`url(#${fade})`} />
        </Wallpaper>
        <MenuItems />
        <FileThumb $y={59} />
        <FileLabel $x={1589} $y={123}>无监督学习</FileLabel>
        {depth > 0 && <FileLabel $x={1570} $y={145}>时.pdf</FileLabel>}
        <FileThumb $y={193} />
        <FileLabel $x={1584} $y={258}>章 聚类方</FileLabel>
        <FileLabel $x={1575} $y={278}>法.pdf</FileLabel>
        <Dock>
          {DOCK.map((d, i) => (
            <DockSlot key={i} $run={d.run} $mt={d.mt}>
              <DockIcon viewBox="0 0 34 34">{d.art}</DockIcon>
            </DockSlot>
          ))}
        </Dock>
        <Notebook />
        <LiveShadow />
        <Live depth={depth} />
        <Pointer viewBox="0 0 14 20"><path d="M1 1v15l4-3 3 6 3-1-3-6h5z" fill={SLATE} stroke={LIGHT} strokeWidth=".6" /></Pointer>
      </Desktop>
      <SideBand $w={96} $depth={depth} />
      {depth === 0 && <Banner>更多<Narrow $dx={-1}>I</Narrow><Narrow $dx={0}>T</Narrow>视频</Banner>}
    </Scene>
  );
}

export default function App() {
  return (
    <>
      <Global />
      <Screen depth={0} />
    </>
  );
}
